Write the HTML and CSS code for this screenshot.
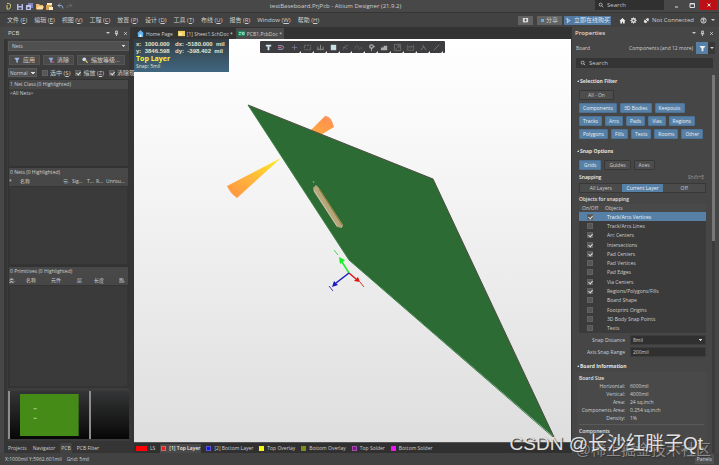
FILE: index.html
```html
<!DOCTYPE html>
<html lang="en">
<head>
<meta charset="utf-8">
<title>testBaseboard.PrjPcb - Altium Designer (21.9.2)</title>
<link rel="stylesheet" href="styles.css">
</head>
<body>
<header class="titlebar">
  <svg class="quick" viewBox="0 0 72 12" width="72" height="12" aria-hidden="true">
    <path d="M2 3.500q4-.5 3.500 3t-3.500 2.500M2 5v4" fill="none" stroke="#d5cf78"/>
    <path d="M12 4h6v6h-6z" fill="#b5b8e0"/><path d="M13.500 4h3v2h-3zM13.500 7.500h3v2h-3z" fill="#45465e"/>
    <path d="M23 3h5v5h-5z" fill="#8185c8"/><path d="M21 5h5v5h-5z" fill="#c1c3ea"/><path d="M22.500 7h2v2h-2z" fill="#45465e"/>
    <path d="M31 4h3l1 1h3v4h-7z" fill="#e9b873"/><path d="M33 6.500h6l-1.500 3h-6z" fill="#ffdda0"/>
    <path d="M42 3h5v3h-5z" fill="#ffe9bd"/><path d="M41 5h6v5h-6z" fill="#d8a257"/><path d="M44 7h4v3h-4z" fill="#fff0cc"/>
    <path d="M53 5.500h3q2 0 2 3M55 3.500l-2 2 2 2" fill="none" stroke="#8da9c8"/>
    <path d="M67 5.500h-3q-2 0-2 2.500M65 3.500l2 2-2 2" fill="none" stroke="#626a72"/>
  </svg>
  <h1 class="title">testBaseboard.PrjPcb - Altium Designer (21.9.2)</h1>
  <div class="window-tools">
    <label class="top-search"><svg viewBox="0 0 8 8"><circle cx="3.500" cy="3.500" r="2"/><path d="M5 5l2 2"/></svg><input type="text" placeholder="Search" aria-label="Search commands"></label>
    <button class="win" aria-label="Minimize"><svg viewBox="0 0 8 8"><path d="M3 6h3"/></svg></button>
    <button class="win" aria-label="Maximize"><svg viewBox="0 0 8 8"><path d="M2 2.500h4.500v4H2zM2 3h4.500"/></svg></button>
    <button class="win close" aria-label="Close"><svg viewBox="0 0 8 8"><path d="M2.500 2.500l3 3M5.500 2.500l-3 3"/></svg></button>
  </div>
</header>

<nav class="menubar">
  <div class="menus">
    <button>文件 (<u>F</u>)</button><button>编辑 (<u>E</u>)</button><button>视图 (<u>V</u>)</button><button>工程 (<u>C</u>)</button><button>放置 (<u>P</u>)</button><button>设计 (<u>D</u>)</button><button>工具 (<u>T</u>)</button><button>布线 (<u>U</u>)</button><button>报告 (<u>R</u>)</button><button>Window (<u>W</u>)</button><button>帮助 (<u>H</u>)</button>
  </div>
  <div class="account">
    <button class="box" aria-label="Add comment"><svg viewBox="0 0 8 8"><path d="M1 1h6v5H4L3 7V6H1z" fill="#ddd"/><path d="M4 2v3M2.500 3.500h3" stroke="#555"/></svg></button>
    <button class="box share"><i class="dot"></i>分享</button>
    <button class="box buy"><svg viewBox="0 0 8 8"><path d="M3 1v6M1 2l5 2-4 2" stroke="#b7d4eb" fill="none"/></svg>立即在线购买</button>
    <button class="plain" aria-label="Home"><svg viewBox="0 0 8 8"><path d="M4 1l3.500 3.500H6.500v3h-2v-2h-1v2h-2v-3h-1z" fill="#eee"/></svg></button>
    <button class="plain" aria-label="Settings"><svg viewBox="0 0 8 8"><circle cx="4" cy="4" r="2" fill="none" stroke="#eee" stroke-width="1.500"/><path d="M4 0.500v1M4 6.500v1M.5 4h1M6.500 4h1M1.500 1.500l1 1M5.500 5.500l1 1M6.500 1.500l-1 1M2.500 5.500l-1 1" stroke="#eee"/></svg></button>
    <button class="plain connect"><svg viewBox="0 0 8 8"><path d="M1 6q0-4 3-4l1-1 2 1-1 3-3 2z" fill="#ddd"/><path d="M1 1l6 6" stroke="#444"/></svg>Not Connected</button>
    <button class="plain user" aria-label="User"><svg viewBox="0 0 8 8"><circle cx="4" cy="4" r="3" fill="none" stroke="#ddd"/><circle cx="4" cy="3" r="1.200" fill="#ddd"/><path d="M2 6q2-2.500 4 0z" fill="#ddd"/></svg><span class="caret"></span></button>
  </div>
</nav>

<main class="workspace">
  <aside class="left">
    <div class="panel-head"><span>PCB</span><span class="head-icons"><i class="caret"></i><svg viewBox="0 0 6 8"><path d="M2 1h2v3H2zM1 4.500h4M3 5v2"/></svg><svg viewBox="0 0 6 8"><path d="M1.500 2.500l3 3M4.500 2.500l-3 3"/></svg></span></div>
    <div class="left-body">
      <select class="drop nets" aria-label="Object class"><option>Nets</option></select>
      <div class="actions">
        <button><svg viewBox="0 0 8 8"><path d="M1 1h6v1L5 4.500V8L3 7V4.500L1 2z" fill="#9cb6e4"/></svg>应用</button>
        <button><svg viewBox="0 0 8 8"><path d="M1 1h6v1L5 4.500V8L3 7V4.500L1 2z" fill="#8fa6dc"/><path d="M5 5l3 3M8 5L5 8" stroke="#d24c6c"/></svg>清除</button>
        <button><svg viewBox="0 0 8 8"><circle cx="3" cy="3" r="2.500" fill="#c9dcec"/><path d="M5 5l2.500 2.500" stroke="#f1cf66" stroke-width="1.500"/></svg>缩放等级...</button>
      </div>
      <div class="options">
        <select class="drop mode" aria-label="Highlight mode"><option>Normal</option></select>
        <label><input type="checkbox"><span>选中 (<u>S</u>)</span></label>
        <label><input type="checkbox" checked><span>缩放 (<u>Z</u>)</span></label>
        <label><input type="checkbox" checked><span>清除现</span></label>
      </div>
      <section class="list classes"><h2>1 Net Class (0 Highlighted)</h2><p>&lt;All Nets&gt;</p></section>
      <section class="list nets-list"><h2>0 Nets (0 Highlighted)</h2><div class="cols c-nets"><span>*</span><span>名称</span><span>节.</span><span>Sig...</span><span>T...</span><span>R...</span><span>Unrou...</span></div><div class="well"></div></section>
      <section class="list prims"><h2>0 Primitives (0 Highlighted)</h2><div class="cols c-prims"><span>类.</span><span>名称</span><span>元件</span><span>层</span><span>长度</span><span>跑.</span></div><div class="well"></div></section>
      <div class="preview"><div class="pane"><svg viewBox="0 0 60 40" preserveAspectRatio="none"><path d="M0 0h60v40H0z" fill="#458b17"/><path d="M57 3v36" stroke="#5a7d20"/><path d="M14 14h3M14 23h3" stroke="#b5d892"/></svg></div><div class="pane"></div></div>
    </div>
    <nav class="panel-tabs"><button>Projects</button><button>Navigator</button><button class="active">PCB</button><button>PCB Filter</button></nav>
  </aside>

  <section class="center">
    <nav class="doc-tabs">
      <button><svg viewBox="0 0 8 8"><path d="M4 0l4 4H7v4H1V4H0z" fill="#5fb4ef"/><path d="M3 5h2v3H3z" fill="#e9f5ff"/></svg>Home Page</button>
      <button><svg viewBox="0 0 8 8"><path d="M0 1h8v6H0z" fill="#efcf62"/><path d="M1 3h3v3H1z" fill="#fff0a6"/></svg>[1] Sheet1.SchDoc *</button>
      <button class="active"><svg viewBox="0 0 8 8"><path d="M0 1h8v6H0z" fill="#18895b"/><path d="M1 3h3M1 5h2M5 3h2v2H5z" stroke="#b5efcf" fill="none"/></svg>PCB1.PcbDoc *</button>
    </nav>
    <div class="canvas">
      <svg class="scene" viewBox="134 39 437 403" preserveAspectRatio="xMinYMin slice" role="img" aria-label="3D board view">
        <defs>
          <linearGradient id="cone" x1="1" y1="0" x2="0" y2="1"><stop offset="0" stop-color="#ffed1f"/><stop offset=".55" stop-color="#ffb43d"/><stop offset="1" stop-color="#ff9140"/></linearGradient>
          <linearGradient id="cone2" x1="0" y1="1" x2="1" y2="0"><stop offset="0" stop-color="#ffae3f"/><stop offset=".7" stop-color="#ff954b"/><stop offset="1" stop-color="#f99a79"/></linearGradient>
        </defs>
        <path d="M310 131L325 116Q331 115 334 127L319 136Z" fill="url(#cone2)"/>
        <path d="M281 158L227 186Q230 193 237 198Z" fill="url(#cone)"/>
        <path d="M248 105L433 179L554 437L349 260Z" fill="#2d6b35"/>
        <path d="M248 105L433 179L554 437" fill="none" stroke="#4c4a40"/>
        <path d="M248 105L349 260L553 437" fill="none" stroke="#3d8047"/>
        <path d="M313 188L316 185 319 188 343 225 342 228 337 227 314 192Z" fill="#b5a67c"/>
        <path d="M319 189L342 225" stroke="#9b7b36"/><path d="M314 190L337 226" stroke="#c9c4ac"/><path d="M313 181l1 2" stroke="#8eae8b"/>
        <g stroke-width="1.500">
          <path d="M349 273L342 262" stroke="#19ee24"/><path d="M339 257l6 3-5 4z" fill="#19ee24"/>
          <path d="M349 273L336 283" stroke="#1719c5"/><path d="M332 287l2-6 4 4z" fill="#1719c5"/>
          <path d="M349 273L356 279" stroke="#dc1515"/><path d="M360 282l-6-1 4-4z" fill="#dc1515"/>
        </g>
        <path d="M334 250l4 5" stroke="#43d94a"/><path d="M329 286l4 5" stroke="#3a3cc6"/><path d="M360 282l4 5" stroke="#d33"/>
      </svg>
      <div class="hud"><div class="coords"><span>x: &nbsp;1000.000</span><span>dx: -5180.000 &nbsp;mil</span><span>y: &nbsp;3846.598</span><span>dy: &nbsp;-398.402 &nbsp;mil</span></div><strong>Top Layer</strong><small>Snap: 5mil</small></div>
      <div class="tools">
        <button aria-label="Filter"><svg viewBox="0 0 10 10"><path d="M2 2h6v2H6v4H4V4H2z" fill="#cfe6ee"/></svg></button>
        <button aria-label="Snap"><svg viewBox="0 0 10 10"><path d="M1 3h5q3 2 0 4H1" fill="none" stroke="#a9a4d6"/><path d="M1 5h4" stroke="#e06a80"/></svg></button>
        <button class="more" aria-label="Place"><svg viewBox="0 0 10 10"><path d="M5 2v6M2 5h6" stroke="#6e7490"/></svg></button>
        <button class="more" aria-label="Select"><svg viewBox="0 0 10 10"><path d="M1.500 2.500h7v5h-7z" fill="none" stroke="#777" stroke-dasharray="2 1"/></svg></button>
        <button class="more" aria-label="Align"><svg viewBox="0 0 10 10"><path d="M2 4v4M5 2v6M8 4v4M2 7h6" stroke="#8b8b8b"/></svg></button>
        <button class="more" aria-label="Component"><svg viewBox="0 0 10 10"><path d="M2 2h6v6H2z" fill="#c8dfe2"/></svg></button>
        <button class="more" aria-label="Route"><svg viewBox="0 0 10 10"><path d="M2 8l3-5h3M2 5h3l2 2" fill="none" stroke="#666"/></svg></button>
        <button class="more" aria-label="Tune"><svg viewBox="0 0 10 10"><path d="M1 7q0-4 2-4t2 3 2 0 2 1" fill="none" stroke="#5e5e5e"/></svg></button>
        <button class="more" aria-label="Via"><svg viewBox="0 0 10 10"><circle cx="5" cy="4" r="2" fill="none" stroke="#aaa" stroke-width="1.500"/><path d="M5 5v4M7 4h2" stroke="#aaa"/></svg></button>
        <button class="more" aria-label="Polygon"><svg viewBox="0 0 10 10"><path d="M1 8V5h3V3h4v5z" fill="#aaa"/></svg></button>
        <button class="more" aria-label="Room"><svg viewBox="0 0 10 10"><path d="M1.500 1.500h7v7h-7zM3 7l4-4M5 3h2v2" fill="none" stroke="#717171"/></svg></button>
        <button class="more" aria-label="Dimension"><svg viewBox="0 0 10 10"><path d="M1.500 2v6h7V2M3 6V4h4M5 6l3-3" fill="none" stroke="#666"/></svg></button>
        <button class="more" aria-label="Text"><svg viewBox="0 0 10 10"><path d="M2 8l3-4 3 4M4 2l2 3" fill="none" stroke="#777"/></svg></button>
        <button class="more" aria-label="Line"><svg viewBox="0 0 10 10"><path d="M2 8l6-6" stroke="#777"/></svg></button>
      </div>
    </div>
    <nav class="layers"><button><i class="swatch wide"></i>LS</button><button class="active"><i class="swatch red"></i>[1] Top Layer</button><button><i class="swatch blue"></i>[2] Bottom Layer</button><button><i class="swatch yellow"></i>Top Overlay</button><button><i class="swatch olive"></i>Bottom Overlay</button><button><i class="swatch purple"></i>Top Solder</button><button><i class="swatch pink"></i>Bottom Solder</button></nav>
  </section>

  <aside class="right">
    <div class="panel-head"><span>Properties</span><span class="head-icons"><i class="caret"></i><svg viewBox="0 0 6 8"><path d="M2 1h2v3H2zM1 4.500h4M3 5v2"/></svg><svg viewBox="0 0 6 8"><path d="M1.500 2.500l3 3M4.500 2.500l-3 3"/></svg></span></div>
    <div class="board-row"><span>Board</span><span class="scope">Components (and 12 more)</span><button class="funnel" aria-label="Filter objects"><svg viewBox="0 0 8 8"><path d="M1 1h6v1L5 4v3H3V4L1 2z" fill="#eee"/></svg></button><button class="funnel-more" aria-label="More filters"><i class="caret"></i></button></div>
    <label class="prop-search"><svg viewBox="0 0 8 8"><circle cx="3.500" cy="3.500" r="2"/><path d="M5 5l2 2"/></svg><input type="text" placeholder="Search" aria-label="Search properties"></label>
    <div class="scroller">
      <section class="group filter">
        <h2>Selection Filter</h2>
        <div class="chips"><button>All - On</button></div>
        <div class="chips on"><button>Components</button><button>3D Bodies</button><button>Keepouts</button></div>
        <div class="chips on"><button>Tracks</button><button>Arcs</button><button>Pads</button><button>Vias</button><button>Regions</button></div>
        <div class="chips on"><button>Polygons</button><button>Fills</button><button>Texts</button><button>Rooms</button><button>Other</button></div>
      </section>
      <section class="group snap">
        <h2>Snap Options</h2>
        <div class="chips"><button class="sel">Grids</button><button>Guides</button><button>Axes</button></div>
        <div class="snapping"><strong>Snapping</strong><span>Shift+E</span></div>
        <div class="segments"><button>All Layers</button><button class="sel">Current Layer</button><button>Off</button></div>
        <h3>Objects for snapping</h3>
        <table class="objects">
          <thead><tr><th>On/Off</th><th>Objects</th></tr></thead>
          <tbody>
            <tr class="picked"><td><input type="checkbox" id="o1" checked></td><td><label for="o1">Track/Arcs Vertices</label></td></tr>
            <tr><td><input type="checkbox" id="o2"></td><td><label for="o2">Track/Arcs Lines</label></td></tr>
            <tr><td><input type="checkbox" id="o3" checked></td><td><label for="o3">Arc Centers</label></td></tr>
            <tr><td><input type="checkbox" id="o4" checked></td><td><label for="o4">Intersections</label></td></tr>
            <tr><td><input type="checkbox" id="o5" checked></td><td><label for="o5">Pad Centers</label></td></tr>
            <tr><td><input type="checkbox" id="o6"></td><td><label for="o6">Pad Vertices</label></td></tr>
            <tr><td><input type="checkbox" id="o7"></td><td><label for="o7">Pad Edges</label></td></tr>
            <tr><td><input type="checkbox" id="o8" checked></td><td><label for="o8">Via Centers</label></td></tr>
            <tr><td><input type="checkbox" id="o9" checked></td><td><label for="o9">Regions/Polygons/Fills</label></td></tr>
            <tr><td><input type="checkbox" id="o10"></td><td><label for="o10">Board Shape</label></td></tr>
            <tr><td><input type="checkbox" id="o11"></td><td><label for="o11">Footprint Origins</label></td></tr>
            <tr><td><input type="checkbox" id="o12"></td><td><label for="o12">3D Body Snap Points</label></td></tr>
            <tr><td><input type="checkbox" id="o13"></td><td><label for="o13">Texts</label></td></tr>
          </tbody>
        </table>
        <div class="field"><label for="dist">Snap Distance</label><select id="dist" class="drop"><option>8mil</option></select></div>
        <div class="field"><label for="range">Axis Snap Range</label><input id="range" type="text" value="200mil"></div>
      </section>
      <section class="group info">
        <h2>Board Information</h2>
        <div class="card">
          <h3>Board Size</h3>
          <dl><dt>Horizontal:</dt><dd>6000mil</dd><dt>Vertical:</dt><dd>4000mil</dd><dt>Area:</dt><dd>24 sq.inch</dd><dt>Components Area:</dt><dd>0.254 sq.inch</dd><dt>Density:</dt><dd>1%</dd></dl>
          <h3 class="comps">Components</h3>
          <dl><dt>Total:</dt><dd>1</dd></dl>
        </div>
        <div class="nothing">Nothing selected</div>
      </section>
    </div>
  </aside>
</main>

<footer class="status"><span>X:1000mil Y:5962.601mil</span><span>Grid: 5mil</span><button>Panels</button></footer>
<div class="mark small">@稀土掘金技术社区</div>
<div class="mark">CSDN @长沙红胖子Qt</div>
</body>
</html>
```
FILE: styles.css
```css
* { box-sizing: border-box; }
body {
  margin: 0;
  height: 100vh;
  min-height: 465px;
  display: grid;
  grid-template-rows: 12px 15px 1fr 12px;
  overflow: hidden;
  position: relative;
  background: #464646;
  color: #cfcfcf;
  font: 5px/8px "Open Sans", "Noto Sans CJK SC", sans-serif;
}
h1, h2, h3, p, dl, dd { margin: 0; font-size: inherit; }
button, input, select { font: inherit; color: inherit; border: 0; padding: 0; margin: 0; background: none; border-radius: 0; }
button { display: flex; align-items: center; justify-content: center; white-space: nowrap; }
svg { display: block; flex: none; }
input[type="text"] { min-width: 0; outline: 0; }
input::placeholder { color: #c4c4c4; opacity: 1; }
u { text-decoration-thickness: 1px; text-underline-offset: 1px; }
.caret { width: 0; height: 0; border: 2px solid transparent; border-top: 2px solid #ccc; border-bottom: 0; }

.titlebar { display: grid; grid-template-columns: 1fr auto 1fr; align-items: center; background: #484848; }
.quick { margin-left: 5px; }
.title { font-weight: 400; font-size: 6px; padding-right: 48px; }
.window-tools { display: flex; justify-content: flex-end; align-items: stretch; height: 10px; margin-bottom: 2px; }
.top-search { display: flex; align-items: center; gap: 3px; width: 69px; padding-left: 3px; margin-right: 4px; background: #303030; font-size: 6px; }
.top-search input { width: 50px; }
.top-search svg, .prop-search svg { width: 6px; height: 6px; fill: none; stroke: #ccc; }
.win { width: 16px; }
.win svg { width: 8px; height: 8px; stroke: #ddd; fill: none; }
.close { background: #bd1016; width: 17px; margin-right: 2px; }

.menubar { display: flex; justify-content: space-between; align-items: center; background: #424242; border-top: 1px solid #363636; font-size: 6px; }
.menus { display: flex; gap: 7px; padding-left: 7px; }
.account { display: flex; align-items: center; gap: 4px; height: 9px; padding-right: 4px; }
.account svg { width: 7px; height: 7px; }
.box { height: 9px; gap: 2px; background: #626262; width: 15px; }
.share { width: 25px; }
.buy { width: 47px; background: #5379a0; color: #dce8f3; margin-left: -2px; margin-right: 4px; }
.dot { width: 3px; height: 3px; background: #65a9df; }
.plain { width: 7px; gap: 2px; }
.connect { width: auto; margin-left: 2px; }
.user { width: auto; gap: 4px; margin-left: 2px; }

.workspace { display: grid; grid-template-columns: 134px minmax(0, 1fr) 148px; min-height: 0; }
.panel-head { height: 12px; display: flex; align-items: center; justify-content: space-between; font-size: 6px; color: #ddd; }
.head-icons { display: flex; gap: 4px; align-items: center; }
.head-icons svg { width: 5px; height: 7px; fill: none; stroke: #ddd; }

.left { display: flex; flex-direction: column; min-width: 0; padding: 0 5px 0 7px; min-height: 0; background: linear-gradient(90deg, #474747 4px, #353535 4px); }
.left .panel-head { margin: 0 -1px 0 -3px; padding: 0 2px 0 4px; background: #484848; }
.left-body { flex: 1; min-height: 0; display: flex; flex-direction: column; padding: 2px 0 2px 1px; background: #3c3c3c; }
.drop { appearance: none; padding: 0 3px; border: 1px solid #5a5a5a; background: #505050 conic-gradient(from -45deg at 50% 100%, #ddd 90deg, transparent 0) no-repeat right 3px center / 4px 2px; }
.nets { height: 10px; width: 100%; }
.actions { display: flex; gap: 3px; margin-top: 4px; padding-left: 1px; font-size: 6px; }
.actions button { height: 10px; gap: 3px; padding: 0 4px; background: #4b4b4b; border: 1px solid #555; }
.actions svg { width: 6px; height: 6px; }
.options { display: flex; align-items: center; gap: 5px; margin-top: 3px; margin-right: -3px; height: 9px; white-space: nowrap; font-size: 6px; }
.options .mode { width: 29px; height: 9px; flex: none; font-size: 5px; padding: 0 1px; background-position: right 1px center; }
.options label { display: flex; align-items: center; gap: 2px; flex: none; }
input[type="checkbox"] { appearance: none; width: 6px; height: 6px; background: #565656; border: 1px solid #626262; display: block; position: relative; }
input[type="checkbox"]:checked::after { content: ""; position: absolute; left: 1px; top: 0; width: 2px; height: 3px; border: solid #ddd; border-width: 0 1px 1px 0; rotate: 40deg; }
.list { display: flex; flex-direction: column; border: 1px solid #333; min-height: 0; }
.list h2 { height: 9px; line-height: 9px; padding-left: 1px; background: #484848; font-weight: 400; }
.list p { padding-left: 1px; }
.classes { flex: 87; margin-top: 2px; }
.nets-list { flex: 98; }
.prims { flex: 122; }
.cols { display: grid; height: 9px; align-items: center; background: #474747; white-space: nowrap; }
.c-nets { grid-template-columns: 11px 1fr 9px 15px 9px 10px 22px; }
.c-prims { grid-template-columns: 17px 25px 26px 17px 1fr 9px; }
.well { flex: 1; border: 1px solid #343434; background: #3a3a3a; }
.preview { flex: none; height: 48px; margin-top: 3px; display: grid; grid-template-columns: 2fr 1fr; background: #111; }
.pane { padding: 3px 10px; border-left: 2px solid #918d8a; background: linear-gradient(#343536, #070707); display: flex; }
.pane svg { width: 100%; height: 100%; }
.panel-tabs { height: 11px; display: flex; align-items: center; gap: 4px; margin-top: 1px; }
.panel-tabs button { height: 10px; padding: 0 1px; }
.panel-tabs .active { background: #424242; }

.center { display: flex; flex-direction: column; min-width: 0; background: #303030; }
.doc-tabs { height: 12px; display: flex; gap: 1px; padding: 1px 1px 0; background: #333; }
.doc-tabs button { gap: 2px; padding: 0 2px; }
.doc-tabs svg { width: 7px; height: 7px; }
.doc-tabs .active { background: #4b4b4b; }
.canvas { flex: 1; min-height: 0; position: relative; overflow: hidden; background: linear-gradient(#fff, #f8f8f8 25%, #dedede); }
.scene { width: 100%; height: 100%; }
.hud { position: absolute; left: 0; top: 0; width: 95px; height: 33px; padding: 2px; background: linear-gradient(#343c42, #406781); color: #e4e4c8; }
.coords { display: grid; grid-template-columns: 39px 1fr; font: 700 6px/7px "Liberation Sans", sans-serif; white-space: nowrap; }
.hud strong { display: block; color: #fff22d; font: 700 7px/8px "Open Sans", sans-serif; }
.hud small { display: block; font-size: 5px; line-height: 6px; }
.tools { position: absolute; left: 126px; top: 2px; height: 12px; width: 185px; padding: 0 2px; display: flex; align-items: center; background: #3d3d3f; border-radius: 1px; }
.tools button { flex: 1; height: 12px; position: relative; }
.tools svg { width: 9px; height: 9px; }
.more::after { content: ""; position: absolute; right: 0; bottom: 0; border: 1px solid transparent; border-right-color: #eee; border-bottom-color: #eee; }
.layers { height: 11px; display: flex; align-items: center; gap: 4px; padding-left: 1px; background: #303030; border-top: 1px solid #555; white-space: nowrap; overflow: hidden; }
.layers button { gap: 3px; height: 9px; padding: 0 1px; }
.layers .active { background: #494949; font-weight: 600; color: #eee; }
.swatch { width: 5px; height: 5px; }
.wide { width: 11px; background: #f00; }
.red { background: #e02020; border: 1px solid #cf6a60; }
.blue { background: #1616e8; border: 1px solid #5757d6; }
.yellow { background: #f4f41d; }
.olive { background: #7c8b1c; }
.purple { background: #7c1585; border: 1px solid #a847ad; }
.pink { background: #ed17ed; }

.right { display: flex; flex-direction: column; min-width: 0; min-height: 0; padding: 0 4px 0 2px; background: #464646; border-left: 1px solid #363636; overflow: hidden; }
.right .panel-head { flex: none; padding: 0 1px; font-weight: 600; }
.board-row { flex: none; display: flex; align-items: center; height: 12px; margin: 3px 0 0 2px; font-size: 5px; }
.scope { margin-left: auto; margin-right: 3px; }
.funnel { width: 12px; height: 12px; background: #5680a6; }
.funnel svg { width: 7px; height: 7px; }
.funnel-more { width: 7px; height: 12px; background: #383838; }
.prop-search { flex: none; display: flex; align-items: center; gap: 3px; height: 10px; margin: 4px 2px 7px; padding-left: 4px; background: #343434; font-size: 6px; }
.scroller { flex: 1; min-height: 0; overflow: hidden; padding: 0 6px 0 3px; border-right: 3px solid #3b3b3b; border-image: linear-gradient(#777 0 44%, #3b3b3b 44%) 1; border-width: 0 3px 0 0; }
.group { display: flex; flex-direction: column; }
.group h2 { display: flex; align-items: center; height: 12px; font-size: 5px; font-weight: 700; color: #e2e2e2; }
.group h2::before { content: ""; border: 1px solid transparent; border-right-color: #ddd; border-bottom-color: #ddd; margin-right: 1px; }
.group h3 { font-weight: 600; color: #e2e2e2; }
.filter { gap: 3px; height: 70px; }
.chips { display: flex; gap: 3px; padding-left: 2px; }
.chips button { height: 10px; padding: 0 4px; min-width: 17px; background: #4d4d4d; border: 1px solid #373737; border-radius: 1px; }
.filter .chips:nth-of-type(1) button { width: 35px; }
.filter .chips { height: 10px; }
.chips.on button { padding: 0 3px; }
.chips.on button, .chips .sel, .segments .sel { background: #5680a6; border-color: #4c7397; color: #eaf1f7; }
.snap .chips { margin-top: 3px; }
.snapping { display: flex; justify-content: space-between; padding: 3px 2px 2px; height: 13px; }
.snapping strong { color: #eee; font-weight: 600; }
.snapping span { color: #999; }
.segments { display: grid; grid-template-columns: repeat(3, 1fr); height: 10px; margin-left: 2px; border: 1px solid #383838; background: #4b4b4b; }
.snap h3 { margin: 2px 2px 1px; }
.objects { border-collapse: collapse; height: 129px; margin-left: 2px; background: #3b3b3b; line-height: 8px; }
.objects th, .objects td { padding: 0; text-align: left; font-weight: 400; }
.objects th:first-child { width: 26px; padding-left: 3px; }
.objects thead { background: #494949; }
.objects td:first-child { padding-left: 8px; }
.objects td:last-child { padding-left: 2px; }
.picked { background: #5680a6; color: #f0f5f9; }
.field { display: grid; grid-template-columns: 48px 1fr; gap: 5px; height: 10px; margin-top: 2px; }
.field label { text-align: right; line-height: 10px; }
.field input, .field .drop { width: 100%; height: 10px; padding: 0 2px; border: 1px solid #3d3d3d; background-color: #303030; }
.info { margin-top: 3px; }
.card { padding: 2px 2px 0; background: #494949; }
dl { display: grid; grid-template-columns: 46px 1fr; column-gap: 5px; }
dt { text-align: right; white-space: nowrap; }
.comps { margin-top: 2px; padding-top: 2px; border-top: 1px solid #5a5a5a; }
.nothing { text-align: center; }

.status { display: flex; align-items: center; gap: 5px; padding: 0 5px; background: #424242; }
.status button { margin-left: auto; height: 10px; padding: 0 2px; background: #515151; font-size: 5px; }
.mark { position: absolute; right: 16px; bottom: 9px; font: 19px/24px "Liberation Sans", "Noto Sans CJK SC", sans-serif; color: #e0e0e0; text-shadow: 1px 1px 1px #333; white-space: nowrap; pointer-events: none; }
.mark.small { right: 8px; bottom: 5px; font-size: 15px; line-height: 20px; color: #8c8c8c; }
```
